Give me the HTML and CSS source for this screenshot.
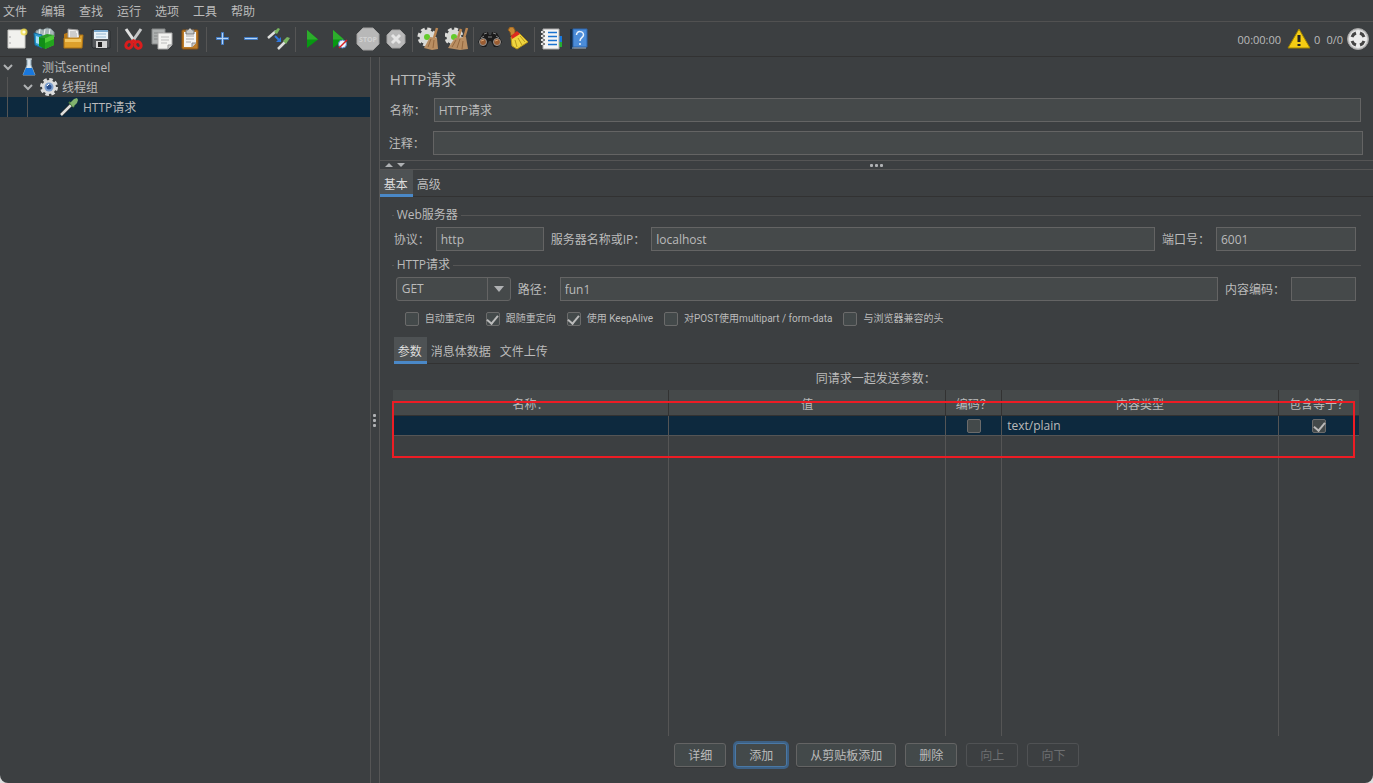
FILE: index.html
```html
<!DOCTYPE html>
<html lang="zh-CN">

<head>
    <meta charset="UTF-8">
    <meta name="viewport" content="width=device-width, initial-scale=1.0">
    <title>HTTP请求</title>
    <link rel="stylesheet" href="styles.css">
</head>

<body>
    <div class="app">
        <nav class="menubar">
            <button type="button">文件</button>
            <button type="button">编辑</button>
            <button type="button">查找</button>
            <button type="button">运行</button>
            <button type="button">选项</button>
            <button type="button">工具</button>
            <button type="button">帮助</button>
        </nav>

        <header class="toolbar">
            <button type="button" aria-label="新建">
                <svg viewBox="0 0 24 24">
                    <path d="M3 3h17v18H3z" fill="#f1f1ee" stroke="#c9c9c5" />
                    <path d="M5 9v2M5 15v2" stroke="#aaa" />
                    <circle cx="19" cy="5" r="3.5" fill="#f4e04a" opacity=".8" />
                    <circle cx="19" cy="5" r="1.6" fill="#fffde0" />
                </svg>
            </button>
            <button type="button" aria-label="模板">
                <svg viewBox="0 0 24 24">
                    <path d="M3 4l4-2 3 1 4-2 4 1 3 3v5H3z" fill="#a9b6b9" stroke="#7f8f94" />
                    <path d="M7 2l-1 6M12 2l-1 6M17 2l-1 6" stroke="#eef2f2" />
                    <path d="M1 6l8 2v13l-7-3z" fill="#2d9bd0" stroke="#126a9b" />
                    <path d="M3 9l3 1v7l-3-1z" fill="#a5def4" />
                    <path d="M6 10l6 1v11l-6-3z" fill="#118e17" />
                    <path d="M12 11l9-3v10l-9 4z" fill="#4bc935" />
                    <path d="M6 10l8-3 7 1-9 3z" fill="#2a9f24" />
                    <path d="M12 16l9-4v6l-9 4z" fill="#22a51d" />
                </svg>
            </button>
            <button type="button" aria-label="打开">
                <svg viewBox="0 0 24 24">
                    <path d="M3 7l5-2v7H3z" fill="#b87816" />
                    <path d="M7 2l10 1 2 10H7z" fill="#f0f0f0" stroke="#999" />
                    <path d="M9 5h6M9 7h7M9 9h7" stroke="#aaa" />
                    <path d="M3 11h15l1-3h3l-1 13H3z" fill="#dda02b" stroke="#ad7214" />
                    <path d="M4 12h16v3H4z" fill="#f2c660" />
                </svg>
            </button>
            <button type="button" aria-label="保存">
                <svg viewBox="0 0 24 24">
                    <path d="M3 3h17l1 1v17H4l-1-1z" fill="#54575a" stroke="#292c2f" />
                    <path d="M5 3h14v9H5z" fill="#e9f2f8" />
                    <path d="M5 3h14v2H5z" fill="#7ba9ce" />
                    <path d="M7 7h10M7 10h10" stroke="#96b8d1" />
                    <path d="M7 14h11v7H7z" fill="#d5d5d5" />
                    <path d="M9 15h4v5H9z" fill="#222" />
                </svg>
            </button>
            <i class="sep"></i>
            <button type="button" aria-label="剪切">
                <svg viewBox="0 0 24 24">
                    <path d="M4 2l9 13" stroke="#e1e1e1" stroke-width="3" />
                    <path d="M19 2l-9 13" stroke="#c5c7c8" stroke-width="3" />
                    <g fill="none" stroke="#d91d1d" stroke-width="3">
                        <ellipse cx="7" cy="18" rx="3" ry="3.5" transform="rotate(35 7 18)" />
                        <ellipse cx="16" cy="18" rx="3" ry="3.5" transform="rotate(-35 16 18)" />
                    </g>
                    <path d="M8 14l3.5-2 3.5 2-3.5 2z" fill="#d91d1d" />
                </svg>
            </button>
            <button type="button" aria-label="复制">
                <svg viewBox="0 0 24 24">
                    <path d="M2 2h13v15H2z" fill="#adb0b0" stroke="#858888" />
                    <path d="M4 6h9M4 9h9M4 12h9" stroke="#858888" />
                    <path d="M8 6h14v12l-4 4H8z" fill="#f2f2f0" stroke="#aaa" />
                    <path d="M11 10h8M11 13h8M11 16h6" stroke="#bcbcbc" />
                    <path d="M18 22v-4h4" fill="#d1d1d1" stroke="#999" />
                </svg>
            </button>
            <button type="button" aria-label="粘贴">
                <svg viewBox="0 0 24 24">
                    <rect x="4" y="3" width="16" height="19" rx="1" fill="#bd7c28" stroke="#8c5413" />
                    <path d="M6 5h12v11l-4 4H6z" fill="#f5f5f3" />
                    <path d="M8 9h8M8 12h8M8 15h5" stroke="#aaa" />
                    <path d="M8 3h2l2-2 2 2h2v4H8z" fill="#c7cac9" stroke="#777" />
                    <path d="M14 20v-4h4" fill="#ccc" stroke="#888" />
                </svg>
            </button>
            <i class="sep"></i>
            <button type="button" aria-label="展开">
                <svg viewBox="0 0 24 24">
                    <path d="M10.500 5.500h2v5h5v2h-5v5h-2v-5h-5v-2h5z" fill="#b4d5f7" stroke="#427bc3" />
                </svg>
            </button>
            <button type="button" aria-label="折叠">
                <svg viewBox="0 0 24 24">
                    <path d="M5.500 10.500h13v2h-13z" fill="#b4d5f7" stroke="#427bc3" />
                </svg>
            </button>
            <button type="button" aria-label="切换">
                <svg viewBox="0 0 24 24">
                    <path d="M1 11l8-7" stroke="#dedfdd" stroke-width="2.500" />
                    <path d="M7 5l4-4 2 1-3 5z" fill="#78b45f" />
                    <path d="M11 22l8-8" stroke="#dedfdd" stroke-width="2.500" />
                    <path d="M16 14l4-4 3 1-4 6z" fill="#78b45f" />
                    <path d="M8 9l4 4" stroke="#2f77df" stroke-width="2" />
                    <path d="M14 10v5H9z" fill="#2f77df" />
                </svg>
            </button>
            <i class="sep"></i>
            <button type="button" aria-label="启动">
                <svg viewBox="0 0 24 24">
                    <path d="M7 3l11 9.500L7 21z" fill="#079812" />
                    <path d="M7 3l11 9.500H7z" fill="#2dad2c" />
                </svg>
            </button>
            <button type="button" aria-label="不停顿开始">
                <svg viewBox="0 0 24 24">
                    <path d="M5 3l11 9.500L5 21z" fill="#079812" />
                    <path d="M5 3l11 9.500H5z" fill="#2dad2c" />
                    <circle cx="14.500" cy="17" r="4" fill="#eef3fb" stroke="#5585c5" />
                    <path d="M19 13l-8 8" stroke="#d71d20" stroke-width="1.500" />
                </svg>
            </button>
            <button type="button" aria-label="停止">
                <svg viewBox="0 0 24 24">
                    <path d="M7 1h10l6 6v10l-6 6H7l-6-6V7z" fill="#b8b8b8" stroke="#a1a1a1" />
                    <text class="stop-text" x="12" y="15" text-anchor="middle">STOP</text>
                </svg>
            </button>
            <button type="button" aria-label="关闭">
                <svg viewBox="0 0 24 24">
                    <path d="M8 3h8l5 5v8l-5 5H8l-5-5V8z" fill="#b8b8b8" stroke="#a1a1a1" />
                    <path d="M8 8l8 8M16 8l-8 8" stroke="#e5e5e5" stroke-width="3" />
                </svg>
            </button>
            <i class="sep"></i>
            <button type="button" aria-label="清除">
                <svg viewBox="0 0 24 24">
                    <circle cx="10" cy="10" r="8" fill="none" stroke="#dededc" stroke-width="3" stroke-dasharray="3.800 2.480" />
                    <circle cx="10" cy="10" r="7.500" fill="#d8dad6" />
                    <circle cx="10" cy="10" r="3" fill="#64cb2b" />
                    <path d="M20 1l-3 10" stroke="#b98552" stroke-width="2.500" />
                    <path d="M13 10l7 1 1 11-6 1-8-2z" fill="#b98e62" />
                    <path d="M14 12l-3 8M17 13l-1 8" stroke="#94683f" />
                </svg>
            </button>
            <button type="button" aria-label="清除全部">
                <svg viewBox="0 0 24 24">
                    <circle cx="9" cy="10" r="8" fill="none" stroke="#dededc" stroke-width="3" stroke-dasharray="3.800 2.480" />
                    <circle cx="9" cy="10" r="7.500" fill="#d8dad6" />
                    <circle cx="9" cy="10" r="3" fill="#64cb2b" />
                    <path d="M16 2l-3 9M22 1l-3 10" stroke="#b98552" stroke-width="2.500" />
                    <path d="M10 11l11-1 2 12-8 1-12-2z" fill="#b98e62" />
                    <path d="M11 13l-4 7M15 12l-3 9M18 14l-1 8" stroke="#94683f" />
                </svg>
            </button>
            <i class="sep"></i>
            <button type="button" aria-label="查找">
                <svg viewBox="0 0 24 24">
                    <path d="M5 6l5-1 1 3h2l1-3 5 1 5 9-4 5h-4l-3-6h-2l-3 6H4l-4-5z" fill="#1b1b1b" />
                    <path d="M6 7l3-1M15 6l3 1M3 11l3-2M18 9l3 2M10 10h4" stroke="#858585" />
                    <circle cx="5" cy="15" r="3.500" fill="#9a5c31" stroke="#929292" />
                    <circle cx="19" cy="15" r="3.500" fill="#9a5c31" stroke="#929292" />
                    <path d="M3 14l3-1M17 14l3-1" stroke="#dda16e" />
                </svg>
            </button>
            <button type="button" aria-label="重置查找">
                <svg viewBox="0 0 24 24">
                    <path d="M2 3l2-3h3l2 3v4l-4 2-1-4z" fill="#c88734" stroke="#8c5a1d" />
                    <path d="M5 10l8-4 9 9-11 7-5-3z" fill="#efd53f" stroke="#b79418" />
                    <path d="M5 9l6-5 3 3-8 5z" fill="#dc2b20" />
                    <path d="M9 13l2 7M12 11l4 7M14 9l5 6" stroke="#b8981c" />
                </svg>
            </button>
            <i class="sep"></i>
            <button type="button" aria-label="函数助手">
                <svg viewBox="0 0 24 24">
                    <path d="M18 9h5v6h-5z" fill="#1878dc" />
                    <path d="M18 15h5v5h-5z" fill="#24ad32" />
                    <path d="M4 2h16v20H4z" fill="#f5f5f5" stroke="#aaa" />
                    <path d="M9 5.500h9M9 9.500h9M9 13.500h9M9 17.500h9" stroke="#1972cf" stroke-width="1.500" />
                    <path d="M2 5h4M2 9h4M2 13h4M2 17h4" stroke="#ddd" stroke-width="2" />
                    <path d="M5 4v2M5 8v2M5 12v2M5 16v2" stroke="#222" />
                </svg>
            </button>
            <button type="button" aria-label="帮助">
                <svg viewBox="0 0 24 24">
                    <path d="M3 2h4v20H3z" fill="#172c42" />
                    <path d="M6 2h14v18H6z" fill="#4b8cd8" stroke="#2c65ac" />
                    <path d="M5 21h14" stroke="#9fb6cc" />
                    <path d="M9.500 8c0-5 7-4 7 0 0 2.500-3.500 2.500-3.500 6M13 16v2" fill="none" stroke="#e8f1fb" stroke-width="1.500" />
                </svg>
            </button>

            <div class="status">
                <span class="timer">00:00:00</span>
                <svg viewBox="0 0 24 24">
                    <path d="M12 2l11 19H1z" fill="#f5cd13" stroke="#a18400" stroke-linejoin="round" />
                    <path d="M12 8v7M12 17v2" stroke="#242424" stroke-width="3" />
                </svg>
                <span class="errors">0</span>
                <span class="threads">0/0</span>
                <svg viewBox="0 0 24 24">
                    <circle cx="12" cy="12" r="10.500" fill="#c9c9c9" stroke="#a4a4a4" />
                    <circle cx="12" cy="12" r="9" fill="#ececec" />
                    <path d="M6 10q1-3 4-4M14 6q3 1 4 4M18 14q-1 3-4 4M10 18q-3-1-4-4" fill="none" stroke="#444" stroke-width="3" />
                </svg>
            </div>
        </header>

        <div class="workspace">
            <aside class="tree">
                <div class="row">
                    <svg class="arrow" viewBox="0 0 10 10"><path d="M1 3l4 4 4-4" /></svg>
                    <svg class="node" viewBox="0 0 20 20">
                        <path d="M8 2h4v6l4 10H4L8 8z" fill="#dbe6ed" stroke="#8da6b5" />
                        <path d="M7 11h6l3 7H4z" fill="#1978dd" />
                        <path d="M7 2h6" stroke="#ddd" />
                    </svg>
                    <span>测试sentinel</span>
                </div>
                <div class="row level-1">
                    <svg class="arrow" viewBox="0 0 10 10"><path d="M1 3l4 4 4-4" /></svg>
                    <svg class="node" viewBox="0 0 20 20">
                        <circle cx="10" cy="10" r="7.500" fill="none" stroke="#dcdcdc" stroke-width="3" stroke-dasharray="3.500 2.390" />
                        <circle cx="10" cy="10" r="7" fill="#dcdcdc" />
                        <circle cx="10" cy="10" r="4.500" fill="#7d9fce" />
                        <circle cx="10" cy="10" r="2.500" fill="#2b4f8c" />
                        <path d="M8 9l2-2" stroke="#fff" />
                    </svg>
                    <span>线程组</span>
                </div>
                <div class="row level-2 selected">
                    <svg class="node" viewBox="0 0 20 20">
                        <path d="M2 18l10-10" stroke="#22282c" stroke-width="4" />
                        <path d="M2 18l10-10" stroke="#dededb" stroke-width="2.500" />
                        <path d="M10 5l5 5" stroke="#4a7a3c" stroke-width="2" />
                        <path d="M11 6l4-4 3-1 1 2-1 3-4 4z" fill="#82b36e" />
                    </svg>
                    <span>HTTP请求</span>
                </div>
            </aside>

            <div class="splitter"><i></i><i></i><i></i></div>

            <main class="editor">
                <h1>HTTP请求</h1>
                <div class="field name-field">
                    <label for="name">名称：</label>
                    <input type="text" id="name" value="HTTP请求">
                </div>
                <div class="field comment-field">
                    <label for="comment">注释：</label>
                    <input type="text" id="comment">
                </div>

                <div class="hsplit">
                    <svg class="hsplit-arrows" viewBox="0 0 20 8">
                        <path d="M0 6l4-4 4 4zM12 2h8l-4 4z" fill="#afb1b3" />
                    </svg>
                    <div class="dots"><i></i><i></i><i></i></div>
                </div>

                <div class="tabs">
                    <button type="button" class="active">基本</button>
                    <button type="button">高级</button>
                </div>

                <div class="panel">
                    <fieldset>
                        <legend>Web服务器</legend>
                        <div class="line">
                            <label for="protocol">协议：</label>
                            <input type="text" class="protocol" id="protocol" value="http">
                            <label for="server">服务器名称或IP：</label>
                            <input type="text" class="grow" id="server" value="localhost">
                            <label for="port">端口号：</label>
                            <input type="text" class="port" id="port" value="6001">
                        </div>
                    </fieldset>
                    <fieldset>
                        <legend>HTTP请求</legend>
                        <div class="line">
                            <div class="combo">
                                <select aria-label="方法">
                                    <option>GET</option>
                                    <option>POST</option>
                                </select>
                                <svg viewBox="0 0 10 6"><path d="M0 0h10L5 6z" fill="#afb1b3" /></svg>
                            </div>
                            <label for="path">路径：</label>
                            <input type="text" class="grow" id="path" value="fun1">
                            <label for="encoding">内容编码：</label>
                            <input type="text" class="encoding" id="encoding">
                        </div>
                        <div class="checks">
                            <label><input type="checkbox">自动重定向</label>
                            <label><input type="checkbox" checked>跟随重定向</label>
                            <label><input type="checkbox" checked>使用 KeepAlive</label>
                            <label><input type="checkbox">对POST使用multipart / form-data</label>
                            <label><input type="checkbox">与浏览器兼容的头</label>
                        </div>
                    </fieldset>

                    <div class="tabs inner">
                        <button type="button" class="active">参数</button>
                        <button type="button">消息体数据</button>
                        <button type="button">文件上传</button>
                    </div>

                    <p class="caption">同请求一起发送参数：</p>
                    <div class="params">
                        <table>
                            <colgroup>
                                <col>
                                <col>
                                <col class="col-encode">
                                <col>
                                <col class="col-equals">
                            </colgroup>
                            <thead>
                                <tr>
                                    <th>名称：</th>
                                    <th>值</th>
                                    <th>编码？</th>
                                    <th>内容类型</th>
                                    <th>包含等于？</th>
                                </tr>
                            </thead>
                            <tbody>
                                <tr class="selected">
                                    <td></td>
                                    <td></td>
                                    <td class="center"><input type="checkbox" aria-label="编码"></td>
                                    <td>text/plain</td>
                                    <td class="center"><input type="checkbox" aria-label="包含等于" checked></td>
                                </tr>
                                <tr class="rest">
                                    <td></td>
                                    <td></td>
                                    <td></td>
                                    <td></td>
                                    <td></td>
                                </tr>
                            </tbody>
                        </table>
                        <div class="highlight"></div>
                    </div>

                    <div class="actions">
                        <button type="button">详细</button>
                        <button type="button" class="focused">添加</button>
                        <button type="button">从剪贴板添加</button>
                        <button type="button">删除</button>
                        <button type="button" disabled>向上</button>
                        <button type="button" disabled>向下</button>
                    </div>
                </div>
            </main>
        </div>
    </div>
</body>

</html>
```
FILE: styles.css
```css
* {
    box-sizing: border-box;
}

body {
    margin: 0;
    background-color: #ddd;
    color: #bbb;
    font-family: 'Open Sans', 'Noto Sans CJK SC', sans-serif;
    font-size: 12px;
    line-height: 16px;
}

button,
input,
select {
    margin: 0;
    font: inherit;
    color: inherit;
}

svg {
    display: block;
    flex: none;
}

.app {
    display: flex;
    flex-direction: column;
    height: 100vh;
    background-color: #3c3f41;
    border-radius: 0 0 8px 8px;
    overflow: hidden;
}

/* menu and toolbar */
.menubar {
    display: flex;
    gap: 14px;
    height: 22px;
    padding-left: 3px;
    border-bottom: 1px solid #515151;
}

.menubar button {
    padding: 2px 0 0;
    border: 0;
    background: none;
}

.toolbar {
    display: flex;
    align-items: center;
    height: 35px;
    padding: 0 3px;
    border-bottom: 1px solid #323232;
}

.toolbar button {
    width: 28px;
    height: 28px;
    padding: 2px;
    border: 0;
    background: none;
}

.toolbar svg {
    width: 24px;
    height: 24px;
}

.stop-text {
    font-size: 7px;
    font-weight: bold;
    fill: #d2d2d2;
}

.sep {
    width: 1px;
    height: 25px;
    margin: 0 2px;
    background-color: #555;
}

.status {
    display: flex;
    align-items: center;
    margin-left: auto;
    font-size: 11px;
}

.status span {
    padding-top: 2px;
}

.timer {
    margin-right: 6px;
}

.errors {
    margin: 0 6px 0 3px;
}

.threads {
    margin-right: 3px;
}

.workspace {
    display: flex;
    flex: 1;
    min-height: 0;
}

/* test plan tree */
.tree {
    width: 27%;
    border-right: 1px solid #555;
}

.row {
    display: flex;
    align-items: center;
    height: 20px;
    padding-left: 3px;
}

.row span {
    padding-top: 2px;
}

.level-1 {
    padding-left: 15px;
    margin-left: 7px;
    border-left: 1px solid #555;
}

.level-2 {
    padding-left: 59px;
    background: linear-gradient(#555, #555) 7px 0 / 1px 100% no-repeat, linear-gradient(#555, #555) 27px 0 / 1px 100% no-repeat, #0d293e;
}

.arrow {
    width: 10px;
    height: 10px;
    margin-right: 6px;
    fill: none;
    stroke: #afb1b3;
    stroke-width: 2;
}

.node {
    width: 20px;
    height: 20px;
    margin-right: 3px;
}

.level-2 .node {
    margin-right: 4px;
}

.splitter {
    display: flex;
    flex-direction: column;
    align-items: center;
    justify-content: center;
    gap: 2px;
    width: 9px;
    border-right: 1px solid #555;
}

.splitter i,
.dots i {
    width: 3px;
    height: 3px;
    border-radius: 1px;
    background-color: #afb1b3;
}

/* sampler editor */
.editor {
    display: flex;
    flex: 1;
    flex-direction: column;
    min-width: 0;
    padding-top: 12px;
}

h1 {
    margin: 0 0 9px 10px;
    font-size: 15px;
    font-weight: normal;
    line-height: 20px;
}

.field {
    display: flex;
    align-items: center;
    gap: 8px;
    padding: 0 12px 0 10px;
}

.field label,
.line label {
    padding-top: 2px;
}

.comment-field {
    padding: 0 10px 0 9px;
    margin: 9px 0 5px;
}

.field input {
    flex: 1;
}

input[type="text"] {
    min-width: 0;
    height: 24px;
    padding: 0 4px;
    border: 1px solid #646464;
    background-color: #45494a;
    outline: 0;
}

.hsplit {
    position: relative;
    display: flex;
    align-items: center;
    justify-content: center;
    height: 10px;
    border-top: 1px solid #555;
    border-bottom: 1px solid #555;
}

.hsplit-arrows {
    position: absolute;
    left: 5px;
    width: 20px;
    height: 8px;
}

.dots {
    display: flex;
    gap: 2px;
}

.tabs {
    display: flex;
    height: 27px;
    box-shadow: inset 0 -1px #323232;
}

.tabs button {
    padding: 2px 5px 0 4px;
    border: 0;
    background: none;
}

.tabs .active {
    background-color: #4e5254;
    box-shadow: inset 0 -3px #4a88c7;
    color: #ddd;
}

.panel {
    display: flex;
    flex: 1;
    flex-direction: column;
    min-height: 0;
    padding: 10px 14px 16px 13px;
}

fieldset {
    min-width: 0;
    margin: 0 -2px 0 -1px;
    padding: 4px 5px 6px 2px;
    border: 0;
    border-top: 1px solid #555;
}

legend {
    padding: 0 3px;
}

.line {
    display: flex;
    align-items: center;
    gap: 7px;
}

.line label {
    margin-right: -1px;
}

.grow {
    flex: 1;
}

.protocol {
    width: 108px;
}

.port {
    width: 140px;
}

.encoding {
    width: 65px;
}

.combo {
    display: grid;
    grid-template-columns: 1fr 23px;
    align-items: center;
    width: 115px;
    margin-left: 2px;
}

.combo select {
    grid-area: 1 / 1 / 2 / 3;
    height: 24px;
    padding: 0 5px;
    border: 1px solid #646464;
    border-radius: 3px;
    background: linear-gradient(#646464, #646464) right 22px top / 1px 100% no-repeat #45494a;
    appearance: none;
}

.combo svg {
    grid-area: 1 / 2;
    justify-self: center;
    width: 10px;
    height: 6px;
    pointer-events: none;
}

.checks {
    display: flex;
    gap: 11px;
    padding: 10px 0 4px 11px;
    font-family: Roboto, 'Noto Sans CJK SC', sans-serif;
    font-size: 10px;
}

.checks label {
    display: flex;
    align-items: center;
    gap: 6px;
}

input[type="checkbox"] {
    display: grid;
    place-items: center;
    width: 14px;
    height: 14px;
    border: 1px solid #6b6b6b;
    border-radius: 2px;
    background-color: #43494a;
    appearance: none;
}

input[type="checkbox"]:checked::before {
    content: '';
    width: 5px;
    height: 9px;
    margin-bottom: 3px;
    border: solid #bbb;
    border-width: 0 2px 2px 0;
    transform: rotate(40deg);
}

.inner {
    flex: none;
    margin-left: 1px;
}

.caption {
    margin: 7px 0 3px;
    text-align: center;
}

/* parameters table */
.params {
    position: relative;
    flex: 1;
    min-height: 0;
}

table {
    width: 100%;
    height: 100%;
    table-layout: fixed;
    border-spacing: 0;
}

.col-encode {
    width: 56px;
}

.col-equals {
    width: 80px;
}

th {
    height: 26px;
    padding: 4px 0 0;
    border-right: 1px solid #323232;
    border-bottom: 1px solid #323232;
    background-color: #45494a;
    font-weight: normal;
}

td {
    height: 20px;
    padding: 0 5px;
    border-right: 1px solid #555;
    border-bottom: 1px solid #555;
}

th:last-child,
td:last-child {
    border-right: 0;
}

.selected td {
    background-color: #0d293e;
}

.rest td {
    height: auto;
    border-bottom: 0;
}

.center input {
    margin: 0 auto;
}

.highlight {
    position: absolute;
    top: 11px;
    left: -1px;
    right: 4px;
    height: 57px;
    border: 2px solid #ed1c24;
    pointer-events: none;
}

.actions {
    display: flex;
    justify-content: center;
    gap: 9px;
    padding: 7px 0 0 2px;
}

.actions button {
    height: 24px;
    padding: 2px 13px 0;
    border: 1px solid #646464;
    border-radius: 3px;
    background-color: #43494a;
    box-shadow: 0 1px #353739;
}

.actions .focused {
    border-color: #4a78a5;
    box-shadow: 0 0 0 2px #3d6185;
}

.actions button:disabled {
    border-color: #505254;
    background: none;
    box-shadow: none;
    color: #6c6e70;
}
```
